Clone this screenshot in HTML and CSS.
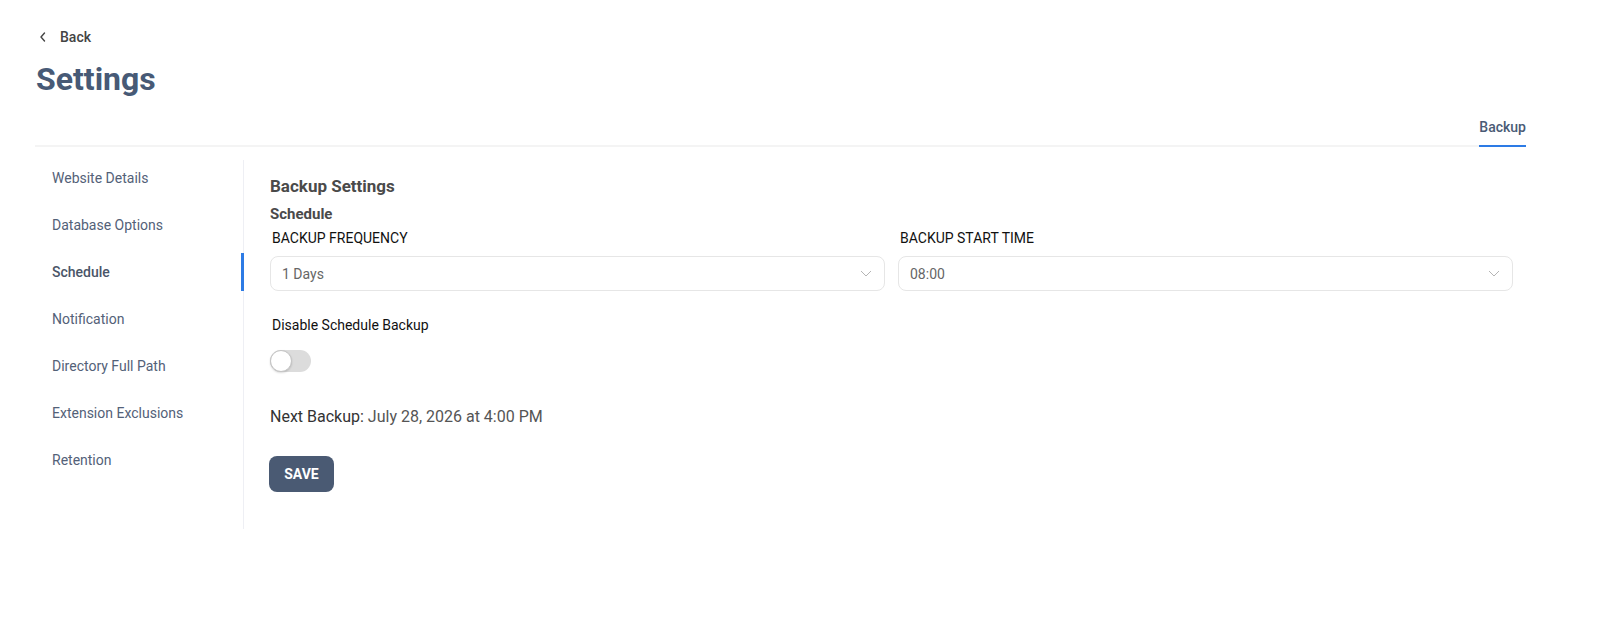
FILE: index.html
```html
<!DOCTYPE html>
<html lang="en">
<head>
<meta charset="utf-8">
<title>Settings</title>
<link rel="stylesheet" href="styles.css">
</head>
<body>
<div class="page">
  <a class="back" href="#">
    <svg class="back-icon" width="8" height="10" viewBox="0 0 8 10"><path d="M5.5 1 L2 5 L5.5 9" fill="none" stroke="#444" stroke-width="1.4" stroke-linecap="round" stroke-linejoin="round"/></svg>
    <span>Back</span>
  </a>
  <h1 class="title">Settings</h1>
  <div class="tabs">
    <div class="tab active">Backup</div>
  </div>
  <div class="layout">
    <nav class="sidebar">
      <a class="nav-item" href="#">Website Details</a>
      <a class="nav-item" href="#">Database Options</a>
      <a class="nav-item active" href="#">Schedule</a>
      <a class="nav-item" href="#">Notification</a>
      <a class="nav-item" href="#">Directory Full Path</a>
      <a class="nav-item" href="#">Extension Exclusions</a>
      <a class="nav-item" href="#">Retention</a>
    </nav>
    <main class="content">
      <h2 class="section-title">Backup Settings</h2>
      <h3 class="sub-title">Schedule</h3>
      <div class="fields">
        <div class="field">
          <label class="field-label">BACKUP FREQUENCY</label>
          <div class="select">
            <span>1 Days</span>
            <svg width="12" height="7" viewBox="0 0 12 7"><path d="M1 1 L6 6 L11 1" fill="none" stroke="#b5b5b5" stroke-width="1"/></svg>
          </div>
        </div>
        <div class="field">
          <label class="field-label">BACKUP START TIME</label>
          <div class="select">
            <span>08:00</span>
            <svg width="12" height="7" viewBox="0 0 12 7"><path d="M1 1 L6 6 L11 1" fill="none" stroke="#b5b5b5" stroke-width="1"/></svg>
          </div>
        </div>
      </div>
      <div class="toggle-label">Disable Schedule Backup</div>
      <div class="toggle"><div class="knob"></div></div>
      <p class="next"><span class="next-key">Next Backup:</span> July 28, 2026 at 4:00 PM</p>
      <button class="save">SAVE</button>
    </main>
  </div>
</div>
</body>
</html>
```

FILE: styles.css
```css
* { box-sizing: border-box; }
body {
  margin: 0;
  font-family: Roboto, "Liberation Sans", sans-serif;
  background: #fff;
  color: #444;
}
.page {
  padding: 28px 73px 0 35px;
}
.back {
  display: flex;
  align-items: center;
  gap: 13px;
  margin-left: 4px;
  height: 18px;
  text-decoration: none;
  color: #444;
  font-size: 14px;
  font-weight: 500;
}
.title {
  margin: 13px 0 0 1px;
  font-size: 32px;
  font-weight: 700;
  color: #475a76;
  line-height: 40px;
}
.tabs {
  margin-top: 14px;
  display: flex;
  justify-content: flex-end;
  border-bottom: 2px solid #f4f4f4;
}
.tab {
  font-size: 14px;
  font-weight: 500;
  color: #4a5b75;
  padding: 6px 0 10px;
  margin-bottom: -2px;
  border-bottom: 2px solid #2d7be5;
}
.layout {
  display: flex;
  margin-top: 13px;
}
.sidebar {
  width: 209px;
  flex: none;
  display: flex;
  flex-direction: column;
  border-right: 1px solid #eeeff4;
  height: 369px;
}
.nav-item {
  position: relative;
  display: block;
  height: 47px;
  padding: 9px 0 0 17px;
  font-size: 14px;
  line-height: 18px;
  color: #536178;
  text-decoration: none;
}
.nav-item.active {
  font-weight: 500;
  color: #4a5568;
}
.nav-item.active::after {
  content: "";
  position: absolute;
  right: -1px;
  top: -1px;
  width: 3px;
  height: 38px;
  background: #2d7be5;
}
.content {
  flex: 1;
  padding: 16px 13px 0 26px;
}
.section-title {
  margin: 0;
  font-size: 17px;
  font-weight: 700;
  color: #4a4a4a;
  line-height: 20px;
}
.sub-title {
  margin: 9px 0 0;
  font-size: 15px;
  font-weight: 700;
  color: #4a4a4a;
  line-height: 18px;
}
.fields {
  display: grid;
  grid-template-columns: 1fr 1fr;
  gap: 13px;
  margin-top: 7px;
}
.field-label {
  display: block;
  font-size: 14px;
  color: #111;
  margin-left: 2px;
  line-height: 16px;
}
.select {
  margin-top: 10px;
  height: 35px;
  border: 1px solid #e6e6e6;
  border-radius: 8px;
  display: flex;
  align-items: center;
  justify-content: space-between;
  padding: 0 12px 0 11px;
  font-size: 14px;
  color: #666;
}
.toggle-label {
  margin-top: 26px;
  margin-left: 2px;
  font-size: 14px;
  color: #111;
  line-height: 16px;
}
.toggle {
  margin-top: 17px;
  width: 41px;
  height: 22px;
  border-radius: 11px;
  background: #dcdcdc;
  position: relative;
}
.knob {
  position: absolute;
  left: 0;
  top: 0;
  width: 22px;
  height: 22px;
  border-radius: 50%;
  background: #fff;
  border: 1px solid #c4c4c4;
  box-shadow: 0 1px 2px rgba(0,0,0,0.15);
}
.next {
  margin: 36px 0 0;
  font-size: 16px;
  color: #555;
  line-height: 18px;
}
.next-key {
  font-weight: 400;
  color: #333;
}
.save {
  margin-top: 30px;
  margin-left: -1px;
  width: 65px;
  height: 36px;
  border: none;
  border-radius: 8px;
  background: #4a5a73;
  color: #fff;
  font-family: Roboto, "Liberation Sans", sans-serif;
  font-weight: 700;
  font-size: 14px;
}
```
